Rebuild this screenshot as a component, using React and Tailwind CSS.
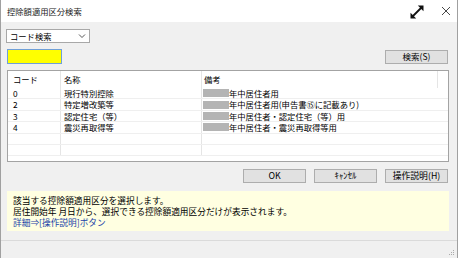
import React from "react";

const rows = [
  { code: "0", name: "現行特別控除", note: "年中居住者用" },
  { code: "2", name: "特定増改築等", note: "年中居住者用(申告書⑮に記載あり)" },
  { code: "3", name: "認定住宅（等）", note: "年中居住者・認定住宅（等）用" },
  { code: "4", name: "震災再取得等", note: "年中居住者・震災再取得等用" },
  null,
  null,
];

export default function App() {
  return (
    <div
      className="w-[458px] h-[258px] bg-[#f0f0f0] flex flex-col text-black overflow-hidden border-l border-r border-[#a0a0a0]"
      style={{ fontFamily: '"Noto Sans CJK JP", "Noto Sans", sans-serif' }}
    >
      {/* title bar */}
      <div className="h-[22px] bg-white flex items-center shrink-0">
        <span className="ml-[6px] text-[8.3px] leading-none text-[#222]">控除額適用区分検索</span>
        <div className="flex-1" />
        <svg width="16" height="16" viewBox="0 0 16 16" className="mr-[16px] mt-[1px]">
          <line x1="3.5" y1="12.5" x2="12.5" y2="3.5" stroke="#111" strokeWidth="1.8" />
          <polygon points="1.5,14.5 1.5,8.8 7.2,14.5" fill="#111" />
          <polygon points="14.5,1.5 14.5,7.2 8.8,1.5" fill="#111" />
        </svg>
        <svg width="10" height="10" viewBox="0 0 10 10" className="mr-[6px]">
          <path d="M1 1 L9 9 M9 1 L1 9" stroke="#333" strokeWidth="0.9" />
        </svg>
      </div>

      {/* body */}
      <div className="flex-1 flex flex-col pl-[5px] pr-[8px]">
        {/* dropdown */}
        <div className="mt-[7px] w-[84px] h-[14px] bg-white border border-[#a8a8a8] flex items-center">
          <span className="ml-[3px] text-[8.3px] leading-none">コード検索</span>
          <div className="flex-1" />
          <svg width="8" height="6" viewBox="0 0 8 6" className="mr-[3px]">
            <path d="M1 1.5 L4 4.5 L7 1.5" stroke="#444" strokeWidth="0.9" fill="none" />
          </svg>
        </div>

        {/* input + search button */}
        <div className="mt-[6px] flex items-center">
          <div className="ml-[1px] w-[55px] h-[15px] bg-[#ffff00] border border-[#6f9fd8]" />
          <div className="flex-1" />
          <button className="mr-[1px] w-[63px] h-[14px] bg-[#e1e1e1] border border-[#adadad] text-[8.5px] leading-none flex items-center justify-center">
            検索(S)
          </button>
        </div>

        {/* table */}
        <div className="mt-[6px] ml-[1px] h-[92px] bg-white border border-[#a3a3a3] flex flex-col overflow-hidden">
          <div className="h-[17px] shrink-0 flex items-center text-[8.3px] leading-none">
            <div className="w-[53px] h-full flex items-center pl-[5px] border-r border-[#e5e5e5]">コード</div>
            <div className="w-[141px] h-full flex items-center pl-[3px] border-r border-[#e5e5e5]">名称</div>
            <div className="w-[236px] h-full flex items-center pl-[2px] border-r border-[#e5e5e5]">備考</div>
          </div>
          {rows.map((r, i) => (
            <div key={i} className="h-[11.4px] shrink-0 flex items-center border-b border-[#efefef] text-[8.3px] leading-none">
              <div className="w-[53px] h-full flex items-center pl-[5px] border-r border-[#e5e5e5]">{r ? r.code : ""}</div>
              <div className="w-[141px] h-full flex items-center pl-[3px] border-r border-[#e5e5e5]">{r ? r.name : ""}</div>
              <div className="flex-1 h-full flex items-center pl-[1px]">
                {r && (
                  <>
                    <span className="w-[26px] h-[8px] bg-[#b4b4b4] shrink-0" />
                    <span className="whitespace-nowrap">{r.note}</span>
                  </>
                )}
              </div>
            </div>
          ))}
        </div>

        {/* buttons */}
        <div className="mt-[7px] flex justify-end gap-[8px] pr-[1px]">
          {["OK", "ｷｬﾝｾﾙ", "操作説明(H)"].map((t) => (
            <button
              key={t}
              className="w-[63px] h-[14px] bg-[#e1e1e1] border border-[#adadad] text-[8.8px] leading-none flex items-center justify-center"
            >
              {t}
            </button>
          ))}
        </div>

        {/* info */}
        <div className="mt-[8px] ml-[1px] h-[40px] bg-[#ffffe1] pl-[6px] pt-[4px] text-[8.7px] leading-[11px] text-black">
          <div>該当する控除額適用区分を選択します。</div>
          <div>居住開始年 月日から、選択できる控除額適用区分だけが表示されます。</div>
          <div className="text-[#1a3fa8]">詳細⇒[操作説明]ボタン</div>
        </div>
      </div>

      {/* status bar */}
      <div className="h-[18px] shrink-0 border-t border-[#dadada] flex justify-end items-end">
        <svg width="6" height="6" viewBox="0 0 6 6" className="mr-[2px] mb-[2px]">
          <rect x="4" y="0" width="1" height="1" fill="#aaa" />
          <rect x="2" y="2" width="1" height="1" fill="#aaa" />
          <rect x="4" y="2" width="1" height="1" fill="#aaa" />
          <rect x="0" y="4" width="1" height="1" fill="#aaa" />
          <rect x="2" y="4" width="1" height="1" fill="#aaa" />
          <rect x="4" y="4" width="1" height="1" fill="#aaa" />
        </svg>
      </div>
    </div>
  );
}
